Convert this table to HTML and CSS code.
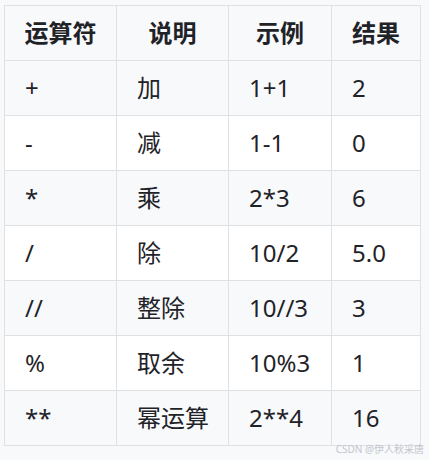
FILE: index.html
```html
<!DOCTYPE html>
<html lang="zh-CN">
<head>
<meta charset="utf-8">
<link rel="stylesheet" href="styles.css">
</head>
<body>
<div class="page">
<table class="ops">
  <colgroup>
    <col class="c1"><col class="c2"><col class="c3"><col class="c4">
  </colgroup>
  <thead>
    <tr><th>运算符</th><th>说明</th><th>示例</th><th>结果</th></tr>
  </thead>
  <tbody>
    <tr><td>+</td><td>加</td><td>1+1</td><td>2</td></tr>
    <tr><td>-</td><td>减</td><td>1-1</td><td>0</td></tr>
    <tr><td>*</td><td>乘</td><td>2*3</td><td>6</td></tr>
    <tr><td>/</td><td>除</td><td>10/2</td><td>5.0</td></tr>
    <tr><td>//</td><td>整除</td><td>10//3</td><td>3</td></tr>
    <tr><td>%</td><td>取余</td><td>10%3</td><td>1</td></tr>
    <tr><td>**</td><td>幂运算</td><td>2**4</td><td>16</td></tr>
  </tbody>
</table>
<div class="mark">CSDN @伊人秋采唐</div>
</div>
</body>
</html>
```

FILE: styles.css
```css
html, body {
  margin: 0;
  padding: 0;
  background: #f8f9fb;
}
.page {
  position: relative;
  width: 429px;
  height: 460px;
  padding: 5px 0 0 4px;
  box-sizing: border-box;
  font-family: "Noto Sans", "Noto Sans CJK SC", sans-serif;
  color: #1f2328;
}
.ops {
  border-collapse: collapse;
  table-layout: fixed;
  width: 416px;
  font-size: 24px;
}
.c1 { width: 112px; }
.c2 { width: 112px; }
.c3 { width: 103px; }
.c4 { width: 89px; }
.ops th, .ops td {
  border: 1px solid #dfe2e5;
  height: 55px;
  padding: 0 0 0 20px;
  box-sizing: border-box;
  line-height: 30px;
  white-space: nowrap;
}
.ops th {
  padding: 0;
  text-align: center;
  font-weight: 700;
  background: #f8f9fb;
}
.ops td {
  text-align: left;
  font-weight: 400;
}
.ops tbody tr:nth-child(odd) { background: #f8f9fb; }
.ops tbody tr:nth-child(even) { background: #ffffff; }
.mark {
  position: absolute;
  right: 5px;
  bottom: 5px;
  font-size: 10px;
  line-height: 12px;
  color: #c3c6cc;
  font-family: "Noto Sans", "Noto Sans CJK SC", sans-serif;
}
```
